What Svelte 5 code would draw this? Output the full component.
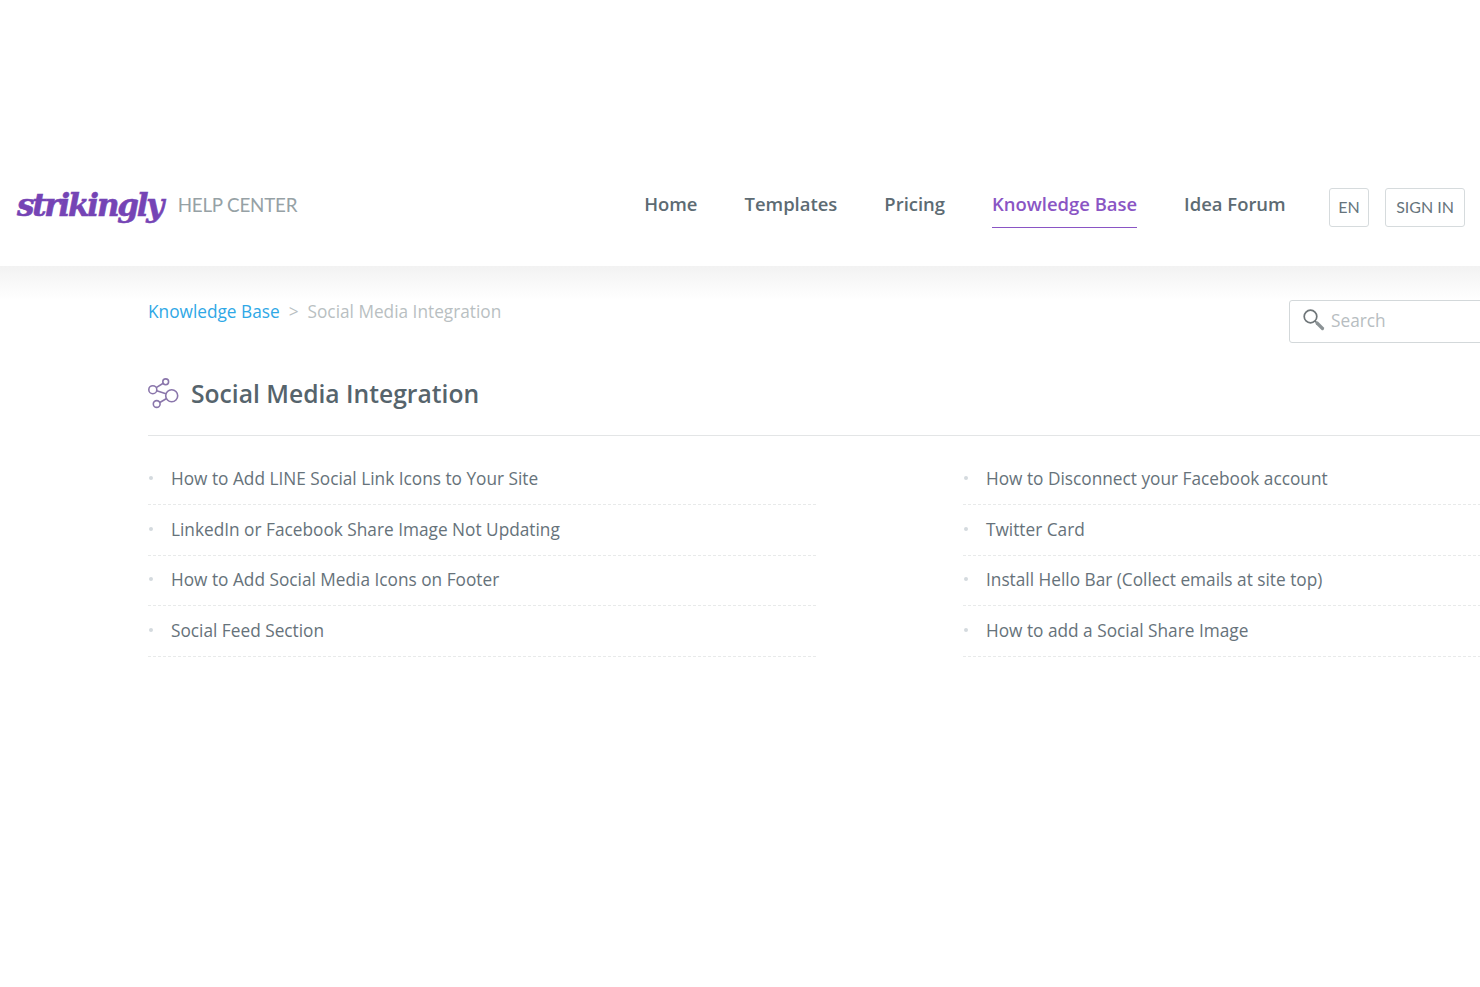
<script>
	const nav = ['Home', 'Templates', 'Pricing', 'Knowledge Base', 'Idea Forum'];
	const left = [
		'How to Add LINE Social Link Icons to Your Site',
		'LinkedIn or Facebook Share Image Not Updating',
		'How to Add Social Media Icons on Footer',
		'Social Feed Section'
	];
	const right = [
		'How to Disconnect your Facebook account',
		'Twitter Card',
		'Install Hello Bar (Collect emails at site top)',
		'How to add a Social Share Image'
	];
</script>

<div class="page">
	<header class="header">
		<div class="brand">
			<span class="logo">strikingly</span>
			<span class="help">HELP CENTER</span>
		</div>
		<nav class="nav">
			{#each nav as item}
				<a href="#top" class:active={item === 'Knowledge Base'}>{item}</a>
			{/each}
		</nav>
		<div class="actions">
			<button class="btn">EN</button>
			<button class="btn">SIGN IN</button>
		</div>
	</header>

	<main class="content">
		<div class="topline">
			<div class="crumbs">
				<a href="#top">Knowledge Base</a>
				<span class="sep">&gt;</span>
				<span class="current">Social Media Integration</span>
			</div>
			<div class="search">
				<svg width="23" height="23" viewBox="0 0 23 23" fill="none">
					<circle cx="7.5" cy="7.5" r="6.3" stroke="#6f7679" stroke-width="1.7" />
					<path d="M12 12l1.5 1.5" stroke="#6f7679" stroke-width="1.5" />
					<path d="M14 14l5.5 5.5" stroke="#8b9295" stroke-width="3.2" stroke-linecap="round" />
				</svg>
				<span>Search</span>
			</div>
		</div>

		<div class="title">
			<svg width="32" height="32" viewBox="0 0 32 32" fill="none" stroke="#8a76ab" stroke-width="1.6">
				<circle cx="4.8" cy="11.7" r="4" />
				<circle cx="17.7" cy="3.8" r="2.9" />
				<circle cx="23.7" cy="17.7" r="6" />
				<circle cx="8.7" cy="26" r="3.4" />
				<path d="M8.2 9.6l7-4.3M8.7 12.8l9.2 3M11.8 24.5l6.8-4" />
			</svg>
			<h1>Social Media Integration</h1>
		</div>

		<div class="columns">
			{#each [left, right] as col}
				<ul class="list">
					{#each col as row}
						<li><a href="#top">{row}</a></li>
					{/each}
				</ul>
			{/each}
		</div>
	</main>
</div>

<style>
	:global(body) {
		margin: 0;
		background: #fff;
		overflow: hidden;
	}

	.page {
		height: 987px;
		overflow: hidden;
		font-family: "Open Sans", sans-serif;
		background: linear-gradient(#f2f2f2 0, #fff 34px) 0 266px no-repeat;
	}

	.header {
		display: flex;
		align-items: center;
		height: 266px;
		box-sizing: border-box;
		padding: 144px 15px 0 17px;
		background: #fff;
	}

	.brand {
		display: flex;
		align-items: center;
		gap: 15.5px;
		margin-right: auto;
	}

	.logo {
		font-family: "DejaVu Serif", serif;
		font-style: italic;
		font-weight: 700;
		font-size: 31px;
		line-height: 46px;
		letter-spacing: -2.2px;
		color: #7544b5;
		-webkit-text-stroke: 0.6px #7544b5;
	}

	.help {
		font-family: Lato, sans-serif;
		font-size: 18.8px;
		color: #96a1a5;
		letter-spacing: -0.2px;
		margin-top: -2px;
	}

	.nav {
		display: flex;
		gap: 47px;
		margin-right: 43px;
	}

	.nav a {
		display: block;
		padding: 8px 0 11px;
		border-bottom: 1.5px solid transparent;
		font-size: 18.45px;
		line-height: 25px;
		font-weight: 600;
		color: #5d6b73;
		text-decoration: none;
	}

	.nav a.active {
		color: #8a55c4;
		border-bottom-color: #8a55c4;
	}

	.actions {
		display: flex;
		gap: 16px;
		margin-top: 5px;
	}

	.btn {
		height: 39px;
		padding: 0 10px 3px;
		border: 1px solid #d6dbdd;
		border-radius: 3px;
		background: #fff;
		font-family: Lato, sans-serif;
		font-size: 16px;
		color: #66747c;
	}

	.btn:first-child {
		padding: 0 8.5px 3px;
	}

	.content {
		width: 1483px;
		margin-left: 148px;
	}

	.topline {
		display: flex;
		justify-content: space-between;
		align-items: flex-start;
		padding-top: 34px;
	}

	.crumbs {
		display: flex;
		gap: 9px;
		font-size: 17.25px;
		line-height: 24px;
	}

	.crumbs a {
		color: #2fa8e6;
		text-decoration: none;
	}

	.sep,
	.current {
		color: #b9bfc2;
	}

	.search {
		display: flex;
		align-items: center;
		gap: 5px;
		width: 342px;
		height: 43px;
		box-sizing: border-box;
		padding: 0 0 2px 13px;
		border: 1px solid #d3d8da;
		border-radius: 3px;
		font-size: 17.25px;
		color: #b7bdc1;
	}

	.title {
		display: flex;
		align-items: center;
		gap: 11px;
		height: 93px;
		box-sizing: border-box;
		padding-top: 9px;
		border-bottom: 1px solid #e3e5e6;
	}

	.title h1 {
		margin: 0;
		font-size: 24.65px;
		line-height: 34px;
		font-weight: 600;
		color: #56646c;
	}

	.columns {
		display: grid;
		grid-template-columns: 668px 668px;
		gap: 147px;
		padding-top: 18.4px;
	}

	.list {
		margin: 0;
		padding: 0;
		list-style: none;
	}

	.list li {
		position: relative;
		height: 50.6px;
		box-sizing: border-box;
		padding: 12.6px 0 0 23px;
		border-bottom: 1px dashed #e8eaea;
		font-size: 17.25px;
		line-height: 24px;
	}

	.list li::before {
		content: "";
		position: absolute;
		left: 1px;
		top: 21.6px;
		width: 4px;
		height: 4px;
		border-radius: 50%;
		background: #d4dade;
	}

	.list a {
		color: #66727a;
		text-decoration: none;
	}
</style>
